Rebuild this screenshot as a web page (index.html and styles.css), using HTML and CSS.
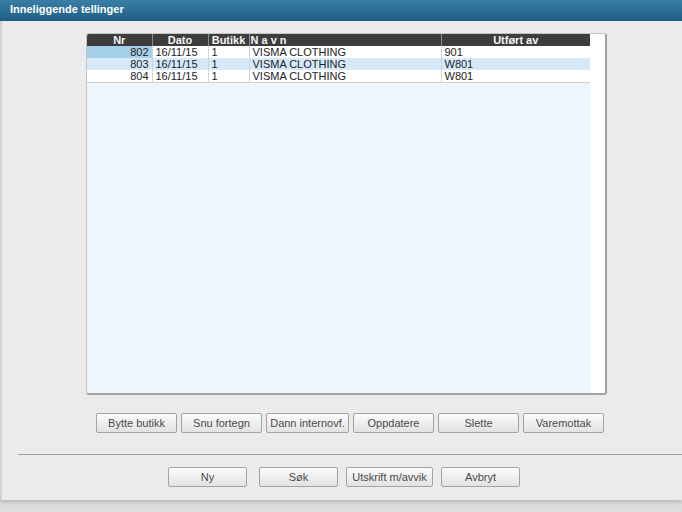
FILE: index.html
```html
<!DOCTYPE html>
<html>
<head>
  <meta charset="utf-8">
  <title>Inneliggende tellinger</title>
  <link rel="stylesheet" href="styles.css">
</head>

<body>
  <div class="dialog">
    <div class="titlebar">Inneliggende tellinger</div>

    <div class="content">
      <div class="grid-box">
        <div class="grid">
          <table class="list">
            <colgroup>
              <col class="col-nr">
              <col class="col-dato">
              <col class="col-butikk">
              <col class="col-navn">
              <col class="col-utfort">
            </colgroup>
            <thead>
              <tr>
                <th>Nr</th>
                <th>Dato</th>
                <th>Butikk</th>
                <th class="left">N a v n</th>
                <th>Utført av</th>
              </tr>
            </thead>
            <tbody>
              <tr>
                <td class="num selected">802</td>
                <td>16/11/15</td>
                <td>1</td>
                <td>VISMA CLOTHING</td>
                <td>901</td>
              </tr>
              <tr class="alt">
                <td class="num">803</td>
                <td>16/11/15</td>
                <td>1</td>
                <td>VISMA CLOTHING</td>
                <td>W801</td>
              </tr>
              <tr class="last">
                <td class="num">804</td>
                <td>16/11/15</td>
                <td>1</td>
                <td>VISMA CLOTHING</td>
                <td>W801</td>
              </tr>
            </tbody>
          </table>
        </div>
        <div class="scroll-space"></div>
      </div>

      <div class="button-row top-row">
        <button type="button" class="btn">Bytte butikk</button>
        <button type="button" class="btn">Snu fortegn</button>
        <button type="button" class="btn wide">Dann internovf.</button>
        <button type="button" class="btn">Oppdatere</button>
        <button type="button" class="btn">Slette</button>
        <button type="button" class="btn">Varemottak</button>
      </div>

      <hr class="divider">

      <div class="button-row bottom-row">
        <button type="button" class="btn">Ny</button>
        <button type="button" class="btn spaced">Søk</button>
        <button type="button" class="btn print">Utskrift m/avvik</button>
        <button type="button" class="btn">Avbryt</button>
      </div>
    </div>
  </div>
</body>
</html>
```

FILE: styles.css
```css
body {
  margin: 0;
  width: 682px;
  height: 512px;
  overflow: hidden;
  background-color: #dcdcdc;
  font-family: "Liberation Sans", Arial, sans-serif;
  font-size: 11px;
  color: #222;
}

.dialog {
  height: 500px;
  background-color: #ebebeb;
  border-left: 2px solid #d2d2d2;
  box-sizing: border-box;
  box-shadow: 0 2px 4px rgba(0, 0, 0, 0.18);
}

.titlebar {
  height: 21px;
  margin-left: -2px;
  padding-left: 10px;
  line-height: 19px;
  color: white;
  font-weight: bold;
  font-size: 11px;
  background: linear-gradient(#3a7ea6, #1f5e84);
}

.content {
  padding-top: 12px;
}

.grid-box {
  display: flex;
  margin-left: 84px;
  width: 521px;
  height: 362px;
  box-sizing: border-box;
  border: 1px solid #c4c4c4;
  border-right: 2px solid #a2a2a2;
  border-bottom: 2px solid #a2a2a2;
  border-radius: 3px;
  background-color: white;
  overflow: hidden;
}

.grid {
  width: 503px;
  background-color: #eef6fd;
}

.scroll-space {
  flex: 1;
  background-color: white;
}

.list {
  width: 503px;
  border-collapse: collapse;
  table-layout: fixed;
}

.col-nr { width: 65px; }
.col-dato { width: 56px; }
.col-butikk { width: 41px; }
.col-navn { width: 192px; }
.col-utfort { width: 149px; }

.list th {
  height: 12px;
  padding: 0 2px;
  background-color: #3d3d3d;
  color: #f4f4f4;
  font-weight: bold;
  font-size: 11px;
  line-height: 12px;
  text-align: center;
  border-right: 1px solid #8a8a8a;
  white-space: nowrap;
  overflow: hidden;
}

.list th:last-child {
  border-right: none;
}

.list th.left {
  text-align: left;
  padding-left: 1px;
}

.list td {
  height: 12px;
  padding: 0 3px;
  line-height: 12px;
  background-color: white;
  border-right: 1px solid #d4d4d4;
  white-space: nowrap;
  overflow: hidden;
}

.list td:last-child {
  border-right: none;
}

.list td.num {
  text-align: right;
  padding-right: 3px;
}

.list td.selected {
  background-color: #a6cfea;
}

.list tr.alt td {
  background-color: #d6e9f9;
}

.list tr.last td {
  border-bottom: 1px solid #d0d0d0;
}

.button-row {
  display: flex;
  gap: 4px;
}

.top-row {
  margin-top: 18px;
  padding-left: 94px;
}

.bottom-row {
  margin-top: 12px;
  padding-left: 166px;
  gap: 8px;
}

.btn {
  width: 81px;
  height: 20px;
  padding: 0;
  border: 1px solid #a3a3a3;
  border-radius: 2px;
  background: linear-gradient(#fbfbfb, #e2e2e2);
  font-family: "Liberation Sans", Arial, sans-serif;
  font-size: 11px;
  color: #4a4a4a;
  cursor: pointer;
}

.btn.wide {
  width: 83px;
}

.bottom-row .btn {
  width: 79px;
}

.bottom-row .btn.spaced {
  margin-left: 4px;
}

.bottom-row .btn.print {
  width: 87px;
}

.divider {
  margin: 21px 0 0 16px;
  width: 664px;
  border: none;
  border-top: 1px solid #a0a0a0;
  height: 0;
}
```
